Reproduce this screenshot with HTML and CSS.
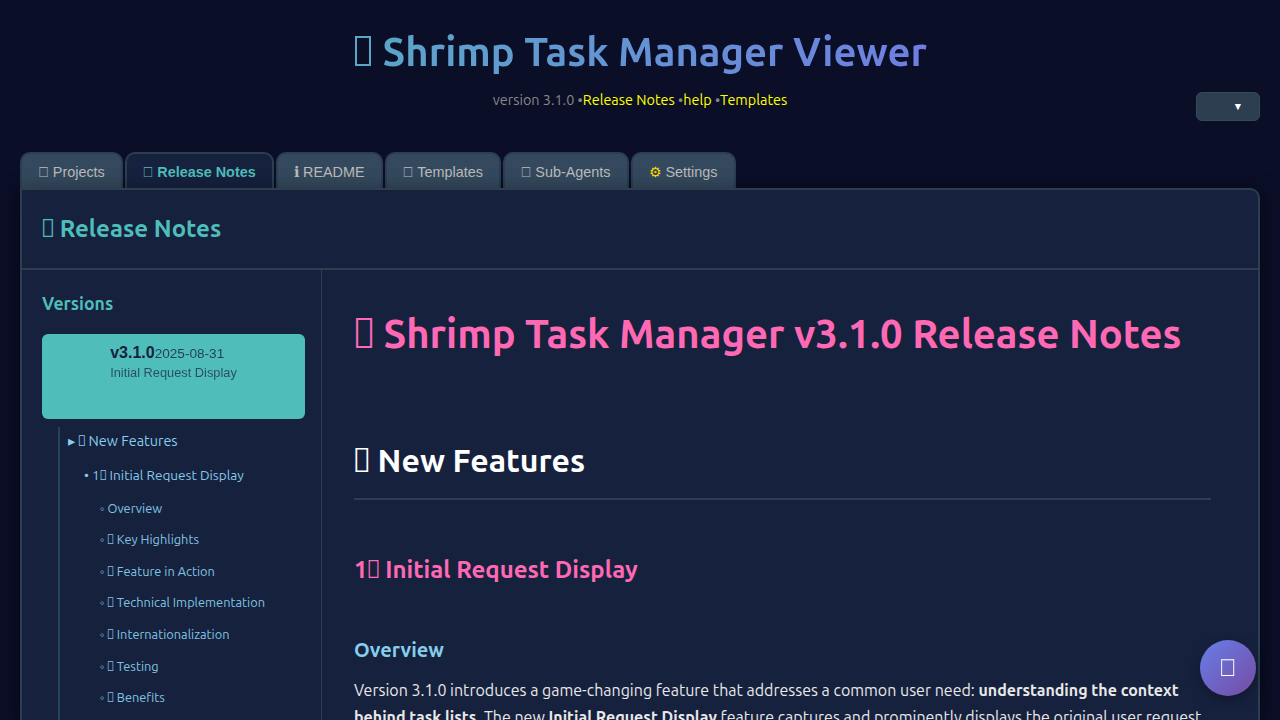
FILE: index.html
```html
<!DOCTYPE html>
<html lang="en">
<head>
<meta charset="utf-8">
<title>Shrimp Task Manager Viewer</title>
<link rel="stylesheet" href="styles.css">
</head>
<body>
<header class="header">
  <h1 class="title">&#x10FF00; Shrimp Task Manager Viewer</h1>
  <div class="version"><span>version 3.1.0 •</span><a>Release Notes</a><span>&nbsp;•</span><a>help</a><span>&nbsp;•</span><a>Templates</a></div>
  <button class="language">▼</button>
</header>
<nav class="tabs">
  <div class="tab projects">&#x10FF00; Projects</div>
  <div class="tab notes active">&#x10FF00; Release Notes</div>
  <div class="tab readme"><b class="info">ℹ</b>README</div>
  <div class="tab templates">&#x10FF00; Templates</div>
  <div class="tab agents">&#x10FF00; Sub-Agents</div>
  <div class="tab settings"><span class="gear">⚙</span> Settings</div>
</nav>
<main class="panel">
  <div class="panel-head"><h2>&#x10FF00; Release Notes</h2></div>
  <div class="columns">
    <aside class="sidebar">
      <h3>Versions</h3>
      <div class="release">
        <div><strong>v3.1.0</strong><span class="date">2025-08-31</span></div>
        <div class="summary">Initial Request Display</div>
      </div>
      <div class="toc">
        <div class="level1"><span class="arrow">▸</span>&#x10FF00; New Features</div>
        <div class="level2">• 1&#x10FF00; Initial Request Display</div>
        <div class="level3"><span class="ring">◦ </span>Overview</div>
        <div class="level3"><span class="ring">◦ </span>&#x10FF00; Key Highlights</div>
        <div class="level3"><span class="ring">◦ </span>&#x10FF00; Feature in Action</div>
        <div class="level3"><span class="ring">◦ </span>&#x10FF00; Technical Implementation</div>
        <div class="level3"><span class="ring">◦ </span>&#x10FF00; Internationalization</div>
        <div class="level3"><span class="ring">◦ </span>&#x10FF00; Testing</div>
        <div class="level3"><span class="ring">◦ </span>&#x10FF00; Benefits</div>
      </div>
    </aside>
    <article class="content">
      <h1>&#x10FF00; Shrimp Task Manager v3.1.0 Release Notes</h1>
      <h2>&#x10FF00; New Features</h2>
      <h3>1&#x10FF00; Initial Request Display</h3>
      <h4>Overview</h4>
      <p>Version 3.1.0 introduces a game-changing feature that addresses a common user need: <strong>understanding the context</strong><br><strong>behind task lists</strong>. The new <strong>Initial Request Display</strong> feature captures and prominently displays the original user request</p>
    </article>
  </div>
</main>
<button class="chat">&#x10FF00;</button>
</body>
</html>
```
FILE: styles.css
```css
* { box-sizing: border-box; }
html, body { height: 100%; }
body {
  display: flex;
  flex-direction: column;
  margin: 0;
  padding: 0 20px;
  overflow: hidden;
  background: #0a0e27;
  color: #e8e8e8;
  font-family: Ubuntu, "Noto Sans", sans-serif;
}
h1, h2, h3, h4, p { margin: 0; }
.header { position: relative; flex: none; height: 152px; padding-top: 28px; text-align: center; }
.title {
  height: 48px;
  background: linear-gradient(90deg, #4fbdba, #7b68ee);
  -webkit-background-clip: text;
  background-clip: text;
  color: transparent;
  font-size: 40px;
  font-weight: 600;
  line-height: 48px;
  white-space: nowrap;
}
.version { display: flex; justify-content: center; height: 20px; margin-top: 14px; font-size: 14.4px; line-height: 20px; color: #888; }
.version a { color: #ff0; }
.language {
  position: absolute;
  top: 91.5px;
  right: 0;
  width: 64px;
  height: 29px;
  padding: 0 0 0 20px;
  border: 1px solid #34495e;
  border-radius: 6px;
  background: #2c3e50;
  color: #fff;
  font-family: "Liberation Sans", sans-serif;
  font-size: 10.4px;
}
.tabs { display: flex; flex: none; gap: 2px; height: 36px; }
.tab {
  height: 36px;
  padding: 10px 0 0 16px;
  border: 2px solid #2c3e50;
  border-bottom: 0;
  border-radius: 10px 10px 0 0;
  background: #34495e;
  color: #bbb;
  font-family: "Liberation Sans", sans-serif;
  font-size: 14.4px;
  line-height: 16px;
  white-space: nowrap;
}
.projects { width: 103px; }
.notes { width: 149px; }
.readme { width: 107px; }
.templates { width: 116px; }
.agents { width: 126px; }
.settings { width: 105px; }
.notes, .templates, .agents, .settings { padding-left: 15.5px; }
.tab.active { background: #16213e; color: #4fbdba; font-weight: bold; }
.info { display: inline-block; width: 9px; font-family: "DejaVu Serif", "DejaVu Sans", serif; }
.gear { color: #ffd700; }
.panel {
  flex: 1;
  min-height: 0;
  display: flex;
  flex-direction: column;
  border: 2px solid #2c3e50;
  border-bottom: 0;
  border-radius: 0 10px 0 0;
  background: #16213e;
  box-shadow: 0 4px 20px rgba(0, 0, 0, .5);
}
.panel-head { flex: none; height: 80px; padding: 23px 20px 0; border-bottom: 2px solid #2c3e50; color: #4fbdba; }
.panel-head h2 { height: 32px; font-size: 24px; font-weight: 600; line-height: 32px; }
.columns { display: flex; flex: 1; min-height: 0; overflow: hidden; }
.sidebar { display: flex; flex-direction: column; flex: none; width: 300px; padding: 20px 16px 0 20px; border-right: 1px solid #2c3e50; }
.sidebar h3 { flex: none; height: 44px; color: #4fbdba; font-size: 17.6px; font-weight: 600; line-height: 27px; }
.release {
  flex: none;
  height: 85px;
  padding: 10px 0 0 68.2px;
  border-radius: 6px;
  background: #4fbdba;
  color: #16213e;
  font-family: "Liberation Sans", sans-serif;
  line-height: 18px;
}
.release strong { font-size: 16px; }
.date { font-size: 13.6px; opacity: .8; }
.summary { margin-top: 1px; font-size: 12.8px; opacity: .7; }
.toc { flex: 1; margin: 8px 0 0 16px; border-left: 2px solid #24435a; color: #87ceeb; }
.level1, .level2, .level3 { white-space: nowrap; }
.level1 { height: 28px; padding-left: 8px; font-size: 14.4px; line-height: 28px; }
.level2 { height: 40px; padding-left: 24px; font-size: 13.6px; line-height: 41px; color: #85cae8; }
.level3 { height: 31.6px; padding-left: 40px; font-size: 12.8px; line-height: 32px; color: #80c4e2; }
.level2 + .level3 { height: 28.2px; line-height: 27px; }
.arrow { display: inline-block; width: 10px; font-family: "DejaVu Sans", sans-serif; }
.content { flex: 1; padding: 0 47px 0 32px; white-space: nowrap; }
.content h1 { height: 60px; margin-top: 34px; color: #ff69b4; font-size: 40px; font-weight: 600; line-height: 60px; }
.content h2 { height: 78px; margin-top: 58px; border-bottom: 2px solid #2c3e50; color: #fff; font-size: 32px; font-weight: 600; line-height: 76px; }
.content h3 { height: 36px; margin-top: 52px; color: #ff69b4; font-size: 24px; font-weight: 600; line-height: 36px; }
.content h4 { height: 30px; margin-top: 47px; color: #87ceeb; font-size: 20px; font-weight: 600; line-height: 30px; }
.content p { margin-top: 12px; font-size: 16px; line-height: 27px; }
.chat {
  position: fixed;
  right: 24px;
  bottom: 24px;
  display: flex;
  align-items: center;
  justify-content: center;
  width: 56px;
  height: 56px;
  padding: 0;
  border: 0;
  border-radius: 50%;
  background: linear-gradient(135deg, #667eea, #764ba2);
  box-shadow: 0 4px 12px rgba(0, 0, 0, .3);
  color: #fff;
  font-family: "Liberation Sans", sans-serif;
  font-size: 24px;
}
```
